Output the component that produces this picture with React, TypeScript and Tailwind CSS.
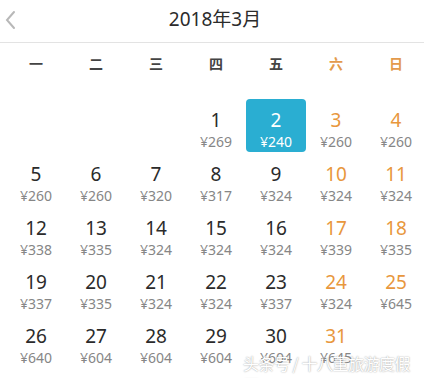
const prices: Record<number, number> = {
  1: 269, 2: 240, 3: 260, 4: 260,
  5: 260, 6: 260, 7: 320, 8: 317, 9: 324, 10: 324, 11: 324,
  12: 338, 13: 335, 14: 324, 15: 324, 16: 324, 17: 339, 18: 335,
  19: 337, 20: 335, 21: 324, 22: 324, 23: 337, 24: 324, 25: 645,
  26: 640, 27: 604, 28: 604, 29: 604, 30: 604, 31: 645,
};

const weekdays = ["一", "二", "三", "四", "五", "六", "日"];

// March 2018 starts on a Thursday
const cells: (number | null)[] = [null, null, null];
for (let d = 1; d <= 31; d++) cells.push(d);

function DayCell({ day, index }: { day: number | null; index: number }) {
  if (day === null) return <div className="h-[54px]" />;
  const weekend = index % 7 >= 5;
  const selected = day === 2;
  return (
    <div className="h-[54px] flex items-start justify-center">
      <div
        className={
          "w-[60px] h-[53px] rounded-[4px] flex flex-col items-center pt-[8px] " +
          (selected ? "bg-[#2aaed2]" : "")
        }
      >
        <span
          className={
            "text-[19px] leading-[26px] " +
            (selected ? "text-white" : weekend ? "text-[#e8973d]" : "text-[#2b2b2b]")
          }
        >
          {day}
        </span>
        <span
          className={
            "text-[14px] leading-[17px] " +
            (selected ? "text-white" : "text-[#868686]")
          }
        >
          ¥{prices[day]}
        </span>
      </div>
    </div>
  );
}

export default function App() {
  return (
    <div className="relative w-[424px] h-[378px] overflow-hidden bg-white font-['Noto_Sans','Noto_Sans_CJK_SC',sans-serif]">
      <div className="relative h-[43px] flex items-center justify-center border-b border-[#e3e3e3]">
        <svg
          className="absolute left-[4px] top-[10px]"
          width="12"
          height="20"
          viewBox="0 0 12 20"
          fill="none"
        >
          <path d="M10 2 L3 10 L10 18" stroke="#b8b8b8" strokeWidth="2" strokeLinecap="round" />
        </svg>
        <span className="text-[19px] text-[#2b2b2b] ml-[6px] mt-[-4px]">2018年3月</span>
      </div>

      <div className="ml-[6px] w-[420px] grid grid-cols-7 h-[40px] items-center">
        {weekdays.map((w, i) => (
          <span
            key={w}
            className={
              "text-center text-[14px] font-bold " +
              (i >= 5 ? "text-[#e39a4c]" : "text-[#444]")
            }
          >
            {w}
          </span>
        ))}
      </div>

      <div className="ml-[6px] mt-[16px] w-[420px] grid grid-cols-7">
        {cells.map((d, i) => (
          <DayCell key={i} day={d} index={i} />
        ))}
      </div>

      <div className="absolute left-[243px] top-[352px] text-[16px] leading-[22px] tracking-[-0.5px] text-white [text-shadow:0_0_1.5px_#8a8a8a] font-['Noto_Sans_CJK_SC',sans-serif]">
        头条号 / 十八董旅游度假区
      </div>
    </div>
  );
}
